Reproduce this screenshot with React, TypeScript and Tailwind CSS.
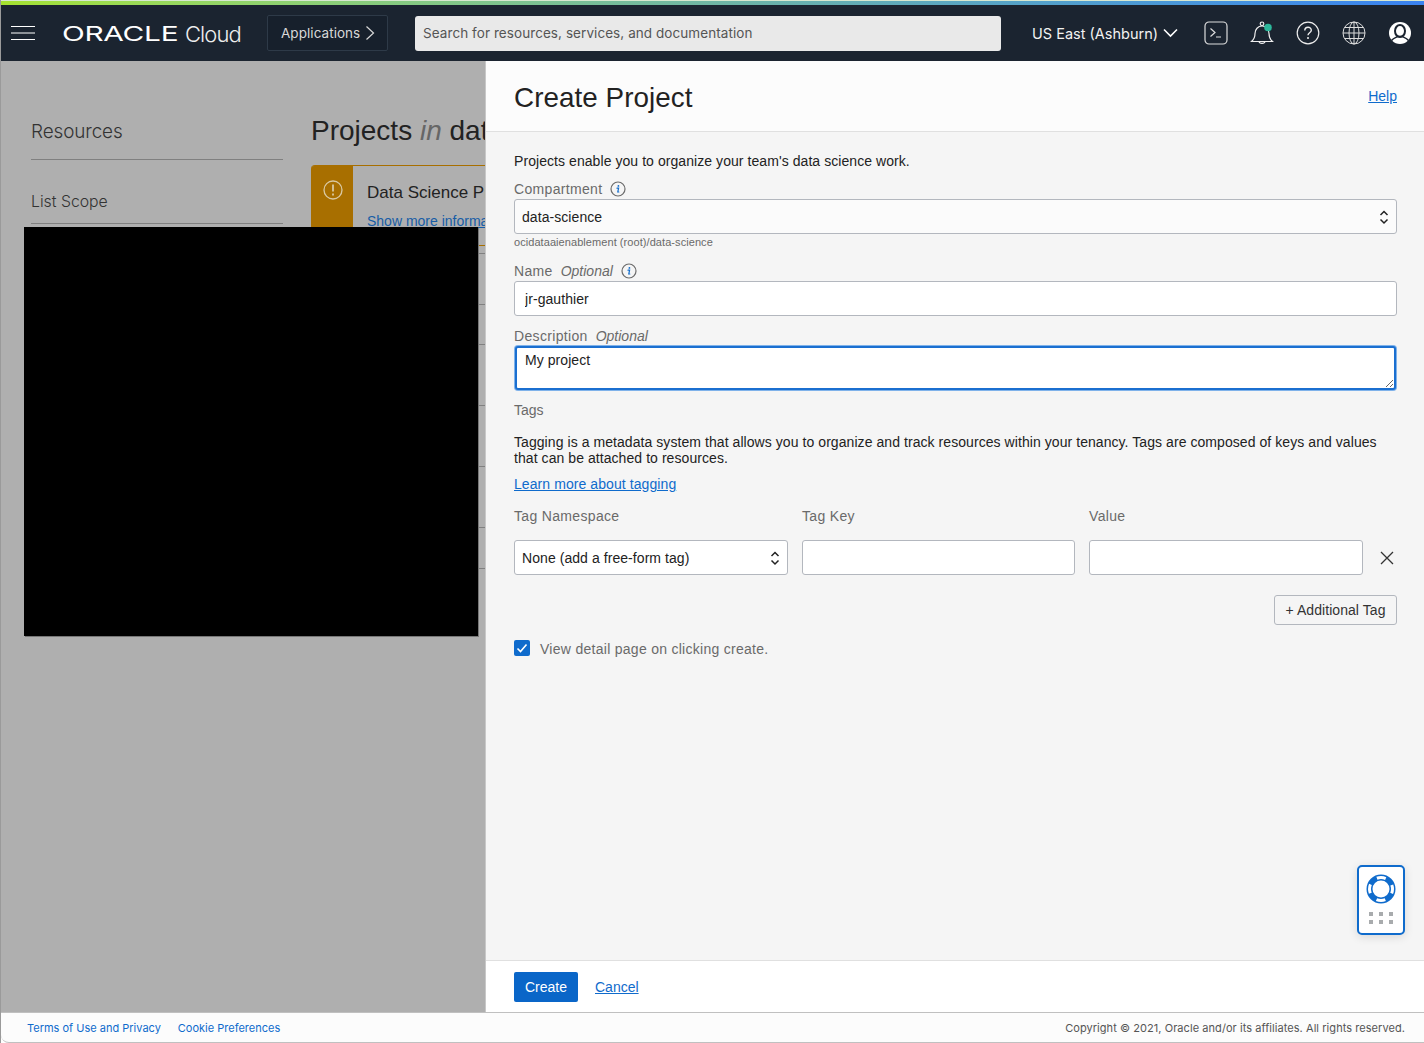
import React from "react";

const sans = "font-['Liberation_Sans',Arial,sans-serif]";
const inter = "font-['Inter',sans-serif]";

function InfoIcon() {
  return (
    <svg width="16" height="16" viewBox="0 0 16 16" fill="none" className="shrink-0">
      <circle cx="8" cy="8" r="7" stroke="#6b6b6b" strokeWidth="1.2" />
      <circle cx="8.4" cy="4.9" r="0.9" fill="#0f6bcc" />
      <path d="M7 7.2h1.6L7.8 11h1" stroke="#0f6bcc" strokeWidth="1.2" strokeLinecap="round" />
    </svg>
  );
}

function UpDown() {
  return (
    <svg width="10" height="16" viewBox="0 0 10 16" fill="none" className="shrink-0">
      <path d="M1.5 6L5 2.500 8.500 6M1.500 10.500L5 14 8.500 10.500" stroke="#222" strokeWidth="1.5" />
    </svg>
  );
}

function FieldSelect({ text, white }: { text: string; white?: boolean }) {
  return (
    <div
      className={`flex h-[35px] items-center justify-between rounded-[3px] border border-[#b3b7be] pl-[7px] pr-[7px] text-[14px] text-[#222] ${
        white ? "bg-white" : "bg-[#fbfbfb]"
      }`}
    >
      <span className="pt-[2px]">{text}</span>
      <UpDown />
    </div>
  );
}

function Label({ children, className = "" }: { children: React.ReactNode; className?: string }) {
  return (
    <div className={`flex h-4 items-center text-[14px] leading-4 tracking-[0.33px] text-[#6a6a6a] ${className}`}>{children}</div>
  );
}

function TextInput({ value }: { value?: string }) {
  return (
    <input
      readOnly
      defaultValue={value}
      className="h-[35px] w-full rounded-[3px] border border-[#b3b7be] bg-white px-[10px] text-[14px] text-[#222] outline-none"
    />
  );
}

function Header() {
  return (
    <header className={`flex h-[56px] shrink-0 items-center bg-[#1b2430] text-white ${inter}`}>
      <svg width="24" height="14" viewBox="0 0 24 14" className="ml-[10px] shrink-0" stroke="#fff" strokeWidth="1">
        <path d="M0 .5h24M0 7h24M0 13.500h24" />
      </svg>
      <div className="ml-[27px] flex w-[178px] shrink-0 items-center pt-[1px]">
        <span className="inline-block w-[123px] shrink-0 origin-left scale-x-[1.49] text-[20px] font-normal leading-none tracking-[-0.2px]">
          ORACLE
        </span>
        <span className="text-[22px] font-light leading-none tracking-[-0.9px] text-[#eee]">Cloud</span>
      </div>
      <div className="ml-[27px] flex h-[36px] w-[121px] shrink-0 items-center rounded-[2px] border border-[#2e3a48] bg-[#17202c] pl-[13px] text-[13.5px] tracking-[0.05px] text-[#d8d8d8]">
        <span>Applications</span>
        <svg width="10" height="16" viewBox="0 0 10 16" fill="none" className="ml-[5px]" stroke="#d8d8d8" strokeWidth="1.2">
          <path d="M1.500 1.500L8.500 8l-7 6.500" />
        </svg>
      </div>
      <div className="ml-[27px] flex h-[35px] w-[586px] shrink-0 items-center rounded-[3px] bg-[#e9e9e9] pl-[8px] pt-px text-[13.5px] tracking-[0.07px] text-[#555]">
        Search for resources, services, and documentation
      </div>
      <div className="ml-[31px] flex items-center text-[14.5px] text-[#f2f2f2]">
        <span className="pt-px">US East (Ashburn)</span>
        <svg width="15" height="10" viewBox="0 0 15 10" fill="none" className="ml-[5px]" stroke="#fff" strokeWidth="1.6">
          <path d="M1 1.500l6.500 6.500L14 1.500" />
        </svg>
      </div>
      <div className="ml-[26px] flex items-center gap-[22px]">
        <svg width="24" height="24" viewBox="0 0 24 24" fill="none" stroke="#ddd">
          <rect x="1" y="1" width="22" height="22" rx="4" strokeWidth="1.2" />
          <path d="M6.500 7.500l4.500 4-4.500 4M12 16h5" strokeWidth="1.2" />
        </svg>
        <svg width="24" height="24" viewBox="0 0 24 24" fill="none" stroke="#eee" strokeWidth="1.2">
          <path d="M1.500 20.500c2.500-2 3.500-4 3.500-8 0-4 3-7.500 7-7.500s7 3.500 7 7.500c0 4 1 6 3.500 8z" />
          <circle cx="12" cy="2.800" r="1.800" />
          <path d="M9 20.500c.3 2.400 5.700 2.400 6 0" />
          <circle cx="18" cy="6.500" r="3.800" fill="#2cb89b" stroke="none" />
        </svg>
        <svg width="24" height="24" viewBox="0 0 24 24" fill="none" stroke="#eee" strokeWidth="1.2">
          <circle cx="12" cy="12" r="10.800" />
          <path d="M8.800 9.500c0-4.200 6.500-4.200 6.500-.3 0 2.600-3.300 2.500-3.300 5" strokeWidth="1.4" />
          <circle cx="12" cy="17" r="1" fill="#eee" stroke="none" />
        </svg>
        <svg width="24" height="24" viewBox="0 0 24 24" fill="none" stroke="#ddd" strokeWidth="1">
          <circle cx="12" cy="12" r="11" />
          <ellipse cx="12" cy="12" rx="5" ry="11" />
          <path d="M12 1v22M1 12h22M2.500 6.500h19M2.500 17.500h19" />
        </svg>
        <svg width="24" height="24" viewBox="0 0 24 24">
          <circle cx="12" cy="12" r="11" fill="#fff" />
          <ellipse cx="12" cy="10" rx="5" ry="6" fill="none" stroke="#1b2430" strokeWidth="2" />
          <path d="M3.500 19.500c2.500-3 5-3 6-4h5c1 1 3.500 1 6 4" fill="none" stroke="#1b2430" strokeWidth="1.500" />
        </svg>
      </div>
    </header>
  );
}

const rowHeights = [51, 40, 61, 61, 61, 41];

function Background() {
  return (
    <div className={`relative flex w-[484px] shrink-0 overflow-hidden bg-[#afafaf] pl-[30px] ${sans}`}>
      <aside className={`w-[252px] shrink-0 ${inter}`}>
        <div className="mt-[58px] flex h-[27px] items-center text-[18.9px] font-light tracking-[-0.1px] text-[#333]">Resources</div>
        <div className="mt-[13px] h-px bg-[#808080]" />
        <div className="mt-[30px] flex h-[24px] items-center text-[15.8px] font-light text-[#333]">List Scope</div>
        <div className="mt-[9px] h-px bg-[#808080]" />
      </aside>
      <div className="ml-[28px] w-[174px] shrink-0">
        <h1 className="mt-[52px] flex h-[36px] items-center whitespace-nowrap text-[28px] font-normal text-[#222]">
          Projects&nbsp;<em className="text-[#666]">in</em>&nbsp;data-science
        </h1>
        <div className="mt-[16px] flex h-[81px] w-[260px] rounded-tl-[4px] border-b border-t border-[#a86f00]">
          <div className="flex w-[42px] shrink-0 justify-center rounded-tl-[3px] bg-[#a86f00] pl-px pt-[14px]">
            <svg width="20" height="20" viewBox="0 0 20 20" fill="none" stroke="#d9c9a3" strokeWidth="1.3">
              <circle cx="10" cy="10" r="9" />
              <path d="M10 4.500v7M10 13.500v2" strokeWidth="1.800" />
            </svg>
          </div>
          <div className="ml-[14px] whitespace-nowrap">
            <div className="mt-[16px] text-[17px] leading-[22px] text-[#222]">Data Science Projects</div>
            <div className="mt-[8px] text-[14px] leading-[18px] text-[#175da6] underline">Show more information</div>
          </div>
        </div>
        <div className="mt-[7px] flex flex-col">
          {rowHeights.map((h, i) => (
            <div key={i} className="w-[260px] border-t border-[#808080]" style={{ height: h }} />
          ))}
          <div className="w-[260px] border-t border-[#808080]" />
        </div>
      </div>
      <div className="absolute left-[23px] top-[166px] h-[409px] w-[454px] bg-black shadow-[1px_1px_0_#777]" />
    </div>
  );
}

function Panel() {
  return (
    <section className={`flex min-w-0 flex-1 flex-col border-l border-[#c8c8c8] bg-[#f5f5f5] tracking-[0.065px] text-[#222] ${sans}`}>
      <div className="flex h-[71px] shrink-0 items-center justify-between border-b border-[#e0e0e0] bg-[#fcfcfc] pl-[28px] pr-[27px]">
        <h2 className={`pt-[3px] text-[27.8px] font-normal leading-none text-[#222] ${sans}`}>Create Project</h2>
        <a className="text-[14px] tracking-normal text-[#0f6bcc] underline">Help</a>
      </div>
      <div className="min-h-0 flex-1 pl-[28px] pr-[27px] pt-[19px]">
        <p className="text-[14px] leading-5">Projects enable you to organize your team's data science work.</p>
        <Label className="mt-[10px] gap-2">
          <span>Compartment</span>
          <InfoIcon />
        </Label>
        <div className="mt-[2px]">
          <FieldSelect text="data-science" />
        </div>
        <div className="mt-px text-[11px] leading-[14px] text-[#6a6a6a]">ocidataaienablement (root)/data-science</div>
        <Label className="mt-[14px]">
          <span>Name</span>
          <em className="ml-2 tracking-normal">Optional</em>
          <span className="ml-2">
            <InfoIcon />
          </span>
        </Label>
        <div className="mt-[2px]">
          <TextInput value="jr-gauthier" />
        </div>
        <Label className="mt-[12px]">
          <span>Description</span>
          <em className="ml-2 tracking-normal">Optional</em>
        </Label>
        <textarea
          readOnly
          defaultValue="My project"
          className="mx-px mt-[2px] block h-[44px] w-[calc(100%-2px)] resize-y rounded-[3px] border-2 border-[#1b6fd0] bg-white px-[8px] py-[4px] text-[14px] leading-[16px] text-[#222] shadow-[0_0_0_1px_#7fb2ea] outline-none"
        />
        <Label className="mt-[12px] tracking-normal">Tags</Label>
        <p className="mt-[16px] max-w-[870px] text-[14px] leading-4">
          Tagging is a metadata system that allows you to organize and track resources within your tenancy. Tags are composed of keys and values that can be attached to resources.
        </p>
        <a className="mt-[10px] block text-[14px] leading-4 tracking-[0.08px] text-[#0f6bcc] underline">Learn more about tagging</a>
        <div className="mt-[16px] grid grid-cols-[274px_273px_274px_1fr] items-center gap-x-[14px] gap-y-[16px]">
          <Label>Tag Namespace</Label>
          <Label>Tag Key</Label>
          <Label>Value</Label>
          <div />
          <FieldSelect text="None (add a free-form tag)" white />
          <TextInput />
          <TextInput />
          <svg width="14" height="14" viewBox="0 0 14 14" fill="none" stroke="#333" strokeWidth="1.300" className="ml-[3px]">
            <path d="M1 1l12 12M13 1L1 13" />
          </svg>
        </div>
        <div className="mt-[20px] flex justify-end">
          <button className={`h-[30px] w-[123px] rounded-[3px] border border-[#b3b7be] bg-[#f5f5f5] text-[14px] text-[#333] ${sans}`}>
            + Additional Tag
          </button>
        </div>
        <div className="mt-[15px] flex items-start gap-[10px]">
          <span className="flex h-4 w-4 items-center justify-center rounded-[2px] bg-[#0f6bcc]">
            <svg width="12" height="12" viewBox="0 0 12 12" fill="none" stroke="#fff" strokeWidth="1.600">
              <path d="M1.500 6.500L4.500 9.500 10.500 2.500" />
            </svg>
          </span>
          <span className="text-[14px] leading-[18px] tracking-[0.28px] text-[#6a6a6a]">View detail page on clicking create.</span>
        </div>
      </div>
      <div className="flex h-[52px] shrink-0 items-center gap-[17px] border-t border-[#e0e0e0] bg-white pl-[28px] pt-px tracking-normal">
        <button className={`h-[30px] w-[64px] rounded-[2px] bg-[#0a66c8] text-[14px] text-white ${sans}`}>Create</button>
        <a className="text-[14px] text-[#0f6bcc] underline">Cancel</a>
      </div>
    </section>
  );
}

export default function App() {
  return (
    <div className="relative flex h-[1043px] w-[1424px] flex-col overflow-hidden border-l border-[#9a9a9a] bg-white">
      <div className="h-px shrink-0 bg-[#d8e8d0]" />
      <div className="h-[4px] shrink-0 bg-gradient-to-r from-[#a5e22f] via-[#6fb6a4] to-[#3a82f0]" />
      <Header />
      <main className="flex min-h-0 flex-1">
        <Background />
        <Panel />
      </main>
      <footer className={`flex h-[31px] shrink-0 items-center justify-between rounded-bl-[8px] border-b border-t border-[#c0c0c0] bg-[#fcfcfc] pl-[26px] pr-[19px] pt-px text-[11px] ${inter}`}>
        <div className="flex gap-[17px] text-[#0f6bcc]">
          <a>Terms of Use and Privacy</a>
          <a>Cookie Preferences</a>
        </div>
        <div className="tracking-[0.06px] text-[#555]">Copyright © 2021, Oracle and/or its affiliates. All rights reserved.</div>
      </footer>
      <div className="absolute left-[1356px] top-[865px] flex h-[70px] w-[48px] flex-col items-center rounded-[5px] border-2 border-[#0f6bcc] bg-white pt-[7px] shadow-[0_2px_10px_rgba(0,0,0,0.12)]">
        <svg width="30" height="30" viewBox="0 0 30 30" fill="none">
          <circle cx="15" cy="15" r="11.500" stroke="#0f6bcc" strokeWidth="6" />
          <circle cx="15" cy="15" r="11.500" stroke="#fff" strokeWidth="3" strokeDasharray="9 9.060" strokeDashoffset="4.500" />
          <circle cx="15" cy="15" r="7.500" fill="#fff" />
        </svg>
        <div className="mt-[8px] grid grid-cols-3 gap-x-[6px] gap-y-[4px]">
          {[0, 1, 2, 3, 4, 5].map((i) => (
            <span key={i} className="h-[4px] w-[4px] bg-[#a8abad]" />
          ))}
        </div>
      </div>
    </div>
  );
}
